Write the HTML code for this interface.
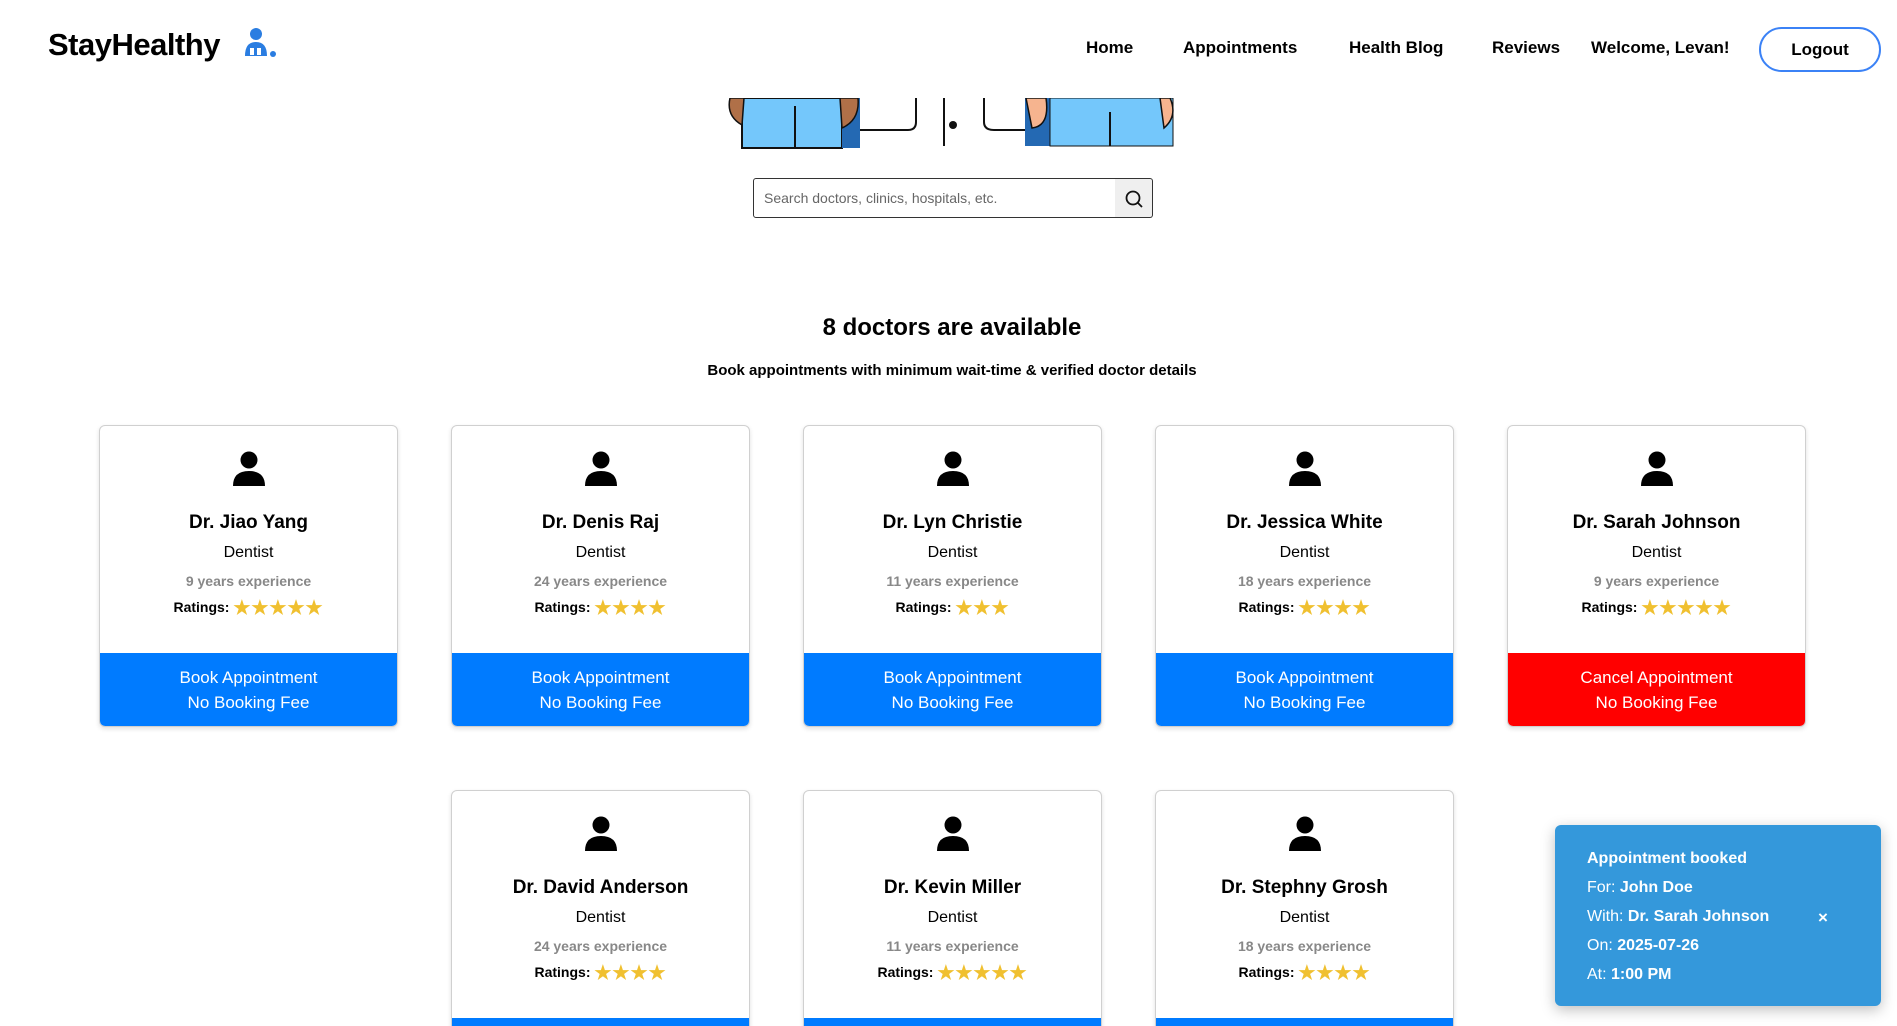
<!DOCTYPE html>
<html><head><meta charset="utf-8"><style>
*{margin:0;padding:0;box-sizing:border-box}
html,body{width:1897px;height:1026px;overflow:hidden;background:#fff}
body{font-family:"Liberation Sans",sans-serif;color:#000}
#w{position:relative;width:1897px;height:1026px;overflow:hidden}
.a{position:absolute}
.nav{font-weight:bold;font-size:17px;top:38px}
.card{position:absolute;width:299px;height:302px;border:1px solid #d0d0d0;border-radius:6px;box-shadow:0 2px 5px rgba(0,0,0,.12);text-align:center;overflow:hidden;background:#fff}
.card svg{position:absolute;left:131px;top:25px}
.card .n{position:absolute;top:86px;width:100%;font-weight:bold;font-size:19px}
.card .d{position:absolute;top:118px;width:100%;font-size:16px}
.card .e{position:absolute;top:147px;width:100%;font-size:14px;font-weight:bold;color:#888}
.card .r{position:absolute;top:171px;width:100%;font-size:14px;font-weight:bold}
.card .r span{color:#f0c030;font-size:19px;letter-spacing:1px;vertical-align:-2px}
.card .b{position:absolute;left:0;right:0;top:227px;height:74px;background:#007bff;color:#fff;font-size:17px;line-height:25px;padding-top:12px;border-radius:0 0 5px 5px}
.card .b.red{background:#f00}
</style></head><body><div id="w">
<div class="a" style="left:48px;top:27px;font-size:31px;font-weight:bold;letter-spacing:-0.5px">StayHealthy</div>
<svg class="a" style="left:242px;top:28px" width="38" height="32" viewBox="0 0 38 32"><circle cx="14" cy="6" r="6" fill="#2a7de1"/><path d="M3 28 Q3 14 14 14 Q25 14 25 28Z" fill="#2a7de1"/><rect x="8" y="20" width="4" height="7" fill="#fff"/><rect x="15" y="20" width="4" height="7" fill="#fff"/><circle cx="31" cy="26" r="3" fill="#2a7de1"/></svg>
<div class="a nav" style="left:1086px">Home</div>
<div class="a nav" style="left:1183px">Appointments</div>
<div class="a nav" style="left:1349px">Health Blog</div>
<div class="a nav" style="left:1492px">Reviews</div>
<div class="a nav" style="left:1591px">Welcome, Levan!</div>
<div class="a" style="left:1759px;top:27px;width:122px;height:45px;border:2px solid #3b82f6;border-radius:23px;text-align:center;line-height:41px;font-weight:bold;font-size:17px">Logout</div>
<svg class="a" style="left:720px;top:98px" width="460" height="52" viewBox="0 0 460 52">
<rect x="22" y="0" width="100" height="50" fill="#74c7fb" stroke="#111" stroke-width="2"/>
<rect x="122" y="0" width="18" height="50" fill="#2469b3"/>
<path d="M10 0 Q6 18 22 27 L24 0Z" fill="#b07048" stroke="#111" stroke-width="1.5"/>
<path d="M120 0 L122 30 Q140 22 138 0Z" fill="#b07048" stroke="#111" stroke-width="1.5"/>
<line x1="75" y1="8" x2="75" y2="50" stroke="#111" stroke-width="2"/>
<path d="M140 32 L188 32 Q196 32 196 24 L196 0" fill="none" stroke="#111" stroke-width="2"/>
<line x1="224" y1="0" x2="224" y2="48" stroke="#111" stroke-width="2"/>
<circle cx="233" cy="27" r="4" fill="#111"/>
<path d="M264 0 L264 24 Q264 32 274 32 L310 32" fill="none" stroke="#111" stroke-width="2"/>
<rect x="305" y="0" width="25" height="48" fill="#2469b3"/>
<rect x="330" y="0" width="123" height="48" fill="#74c7fb" stroke="#111" stroke-width="1"/>
<path d="M306 0 L312 30 Q330 28 326 0Z" fill="#f6b48f" stroke="#111" stroke-width="1.5"/>
<path d="M450 0 Q458 18 444 30 L440 0Z" fill="#f6b48f" stroke="#111" stroke-width="1.5"/>
<line x1="390" y1="14" x2="390" y2="48" stroke="#111" stroke-width="2"/>
</svg>
<div class="a" style="left:753px;top:178px;width:363px;height:40px;border:1px solid #333;border-radius:3px 0 0 3px;font-size:14px;color:#666;line-height:38px;padding-left:10px">Search doctors, clinics, hospitals, etc.</div>
<div class="a" style="left:1115px;top:178px;width:38px;height:40px;border:1px solid #333;border-left:none;border-radius:0 3px 3px 0;background:#efefef"><svg width="38" height="40"><circle cx="18" cy="19" r="6.5" fill="none" stroke="#111" stroke-width="1.8"/><line x1="23" y1="24" x2="27" y2="28" stroke="#111" stroke-width="1.8"/></svg></div>
<div class="a" style="left:0;width:1904px;top:314px;text-align:center;font-size:24px;font-weight:bold">8 doctors are available</div>
<div class="a" style="left:0;width:1904px;top:362px;text-align:center;font-size:15px;font-weight:bold">Book appointments with minimum wait-time &amp; verified doctor details</div>

<div class="card" style="left:99px;top:425px"><svg width="36" height="36" viewBox="0 0 36 36"><circle cx="18" cy="9" r="8.5"/><path d="M2 35 Q2 20 18 20 Q34 20 34 35Z"/></svg><div class="n">Dr. Jiao Yang</div><div class="d">Dentist</div><div class="e">9 years experience</div><div class="r">Ratings: <span>★★★★★</span></div><div class="b">Book Appointment<br>No Booking Fee</div></div>
<div class="card" style="left:451px;top:425px"><svg width="36" height="36" viewBox="0 0 36 36"><circle cx="18" cy="9" r="8.5"/><path d="M2 35 Q2 20 18 20 Q34 20 34 35Z"/></svg><div class="n">Dr. Denis Raj</div><div class="d">Dentist</div><div class="e">24 years experience</div><div class="r">Ratings: <span>★★★★</span></div><div class="b">Book Appointment<br>No Booking Fee</div></div>
<div class="card" style="left:803px;top:425px"><svg width="36" height="36" viewBox="0 0 36 36"><circle cx="18" cy="9" r="8.5"/><path d="M2 35 Q2 20 18 20 Q34 20 34 35Z"/></svg><div class="n">Dr. Lyn Christie</div><div class="d">Dentist</div><div class="e">11 years experience</div><div class="r">Ratings: <span>★★★</span></div><div class="b">Book Appointment<br>No Booking Fee</div></div>
<div class="card" style="left:1155px;top:425px"><svg width="36" height="36" viewBox="0 0 36 36"><circle cx="18" cy="9" r="8.5"/><path d="M2 35 Q2 20 18 20 Q34 20 34 35Z"/></svg><div class="n">Dr. Jessica White</div><div class="d">Dentist</div><div class="e">18 years experience</div><div class="r">Ratings: <span>★★★★</span></div><div class="b">Book Appointment<br>No Booking Fee</div></div>
<div class="card" style="left:1507px;top:425px"><svg width="36" height="36" viewBox="0 0 36 36"><circle cx="18" cy="9" r="8.5"/><path d="M2 35 Q2 20 18 20 Q34 20 34 35Z"/></svg><div class="n">Dr. Sarah Johnson</div><div class="d">Dentist</div><div class="e">9 years experience</div><div class="r">Ratings: <span>★★★★★</span></div><div class="b red">Cancel Appointment<br>No Booking Fee</div></div>

<div class="card" style="left:451px;top:790px"><svg width="36" height="36" viewBox="0 0 36 36"><circle cx="18" cy="9" r="8.5"/><path d="M2 35 Q2 20 18 20 Q34 20 34 35Z"/></svg><div class="n">Dr. David Anderson</div><div class="d">Dentist</div><div class="e">24 years experience</div><div class="r">Ratings: <span>★★★★</span></div><div class="b">Book Appointment<br>No Booking Fee</div></div>
<div class="card" style="left:803px;top:790px"><svg width="36" height="36" viewBox="0 0 36 36"><circle cx="18" cy="9" r="8.5"/><path d="M2 35 Q2 20 18 20 Q34 20 34 35Z"/></svg><div class="n">Dr. Kevin Miller</div><div class="d">Dentist</div><div class="e">11 years experience</div><div class="r">Ratings: <span>★★★★★</span></div><div class="b">Book Appointment<br>No Booking Fee</div></div>
<div class="card" style="left:1155px;top:790px"><svg width="36" height="36" viewBox="0 0 36 36"><circle cx="18" cy="9" r="8.5"/><path d="M2 35 Q2 20 18 20 Q34 20 34 35Z"/></svg><div class="n">Dr. Stephny Grosh</div><div class="d">Dentist</div><div class="e">18 years experience</div><div class="r">Ratings: <span>★★★★</span></div><div class="b">Book Appointment<br>No Booking Fee</div></div>

<div class="a" style="left:1555px;top:825px;width:326px;height:181px;background:#3498db;border-radius:6px;box-shadow:0 4px 14px rgba(0,0,0,.25);color:#fff;font-size:16px;padding:19px 0 0 32px;line-height:29px">
<div style="font-weight:bold">Appointment booked</div>
<div>For: <b>John Doe</b></div>
<div>With: <b>Dr. Sarah Johnson</b></div>
<div>On: <b>2025-07-26</b></div>
<div>At: <b>1:00 PM</b></div>
<div class="a" style="left:263px;top:78px;font-size:17px;font-weight:bold">×</div>
</div>
</div></body></html>
